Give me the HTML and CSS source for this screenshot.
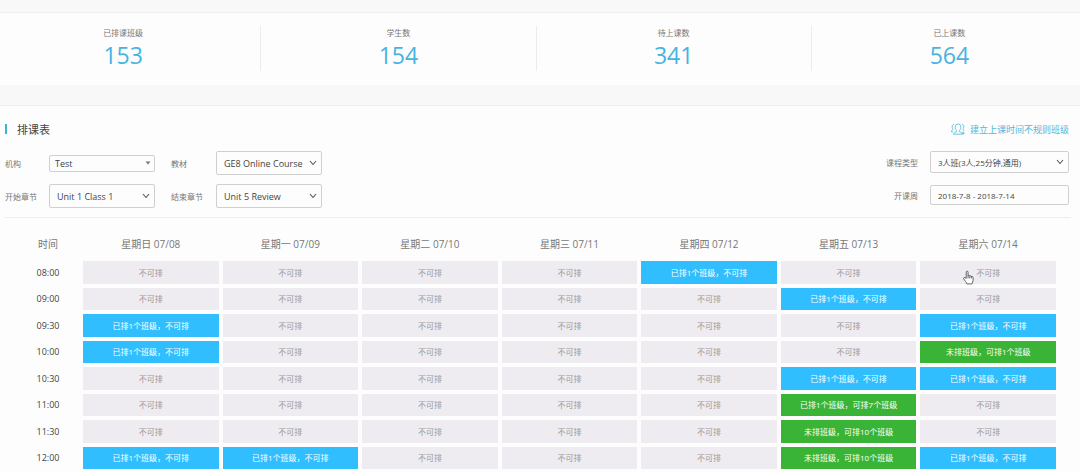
FILE: index.html
```
<!DOCTYPE html>
<html lang="zh-CN">
<head>
<meta charset="utf-8">
<title>排课表</title>
<link rel="stylesheet" href="styles.css">
</head>
<body>
<section class="stats">
  <dl class="stat"><dt>已排课班级</dt><dd>153</dd></dl>
  <dl class="stat"><dt>学生数</dt><dd>154</dd></dl>
  <dl class="stat"><dt>待上课数</dt><dd>341</dd></dl>
  <dl class="stat"><dt>已上课数</dt><dd>564</dd></dl>
</section>
<main class="panel">
  <header class="panel-head">
    <h1 class="title">排课表</h1>
    <a class="create" href="#">
      <svg class="create-icon" viewBox="0 0 14 12" aria-hidden="true"><path d="M4.2 4.2a2.8 3.3 0 0 1 5.6 0c0 1.8-.8 3-1.5 3.5v1c1.500.4 2.900.9 3.200 2.500h-9c.3-1.600 1.700-2.100 3.200-2.500v-1C5 7.200 4.200 6 4.200 4.200zM3.200 1.400C1.500 1.600 1 2.700 1.200 4.200c.1 1 .5 1.700 1 2.100C1.200 6.900.6 7.500.5 8.900h1.600M10.800 1.400c1.700.2 2.200 1.300 2 2.800-.1 1-.5 1.700-1 2.100.8.4 1.200.9 1.500 1.600M12.200 8.600v3M10.700 10.100h3"/></svg>
      <span>建立上课时间不规则班级</span>
    </a>
  </header>
  <form class="filters">
    <div class="filter-grid">
      <label for="org">机构</label>
      <div class="field">
        <select id="org" class="control compact"><option>Test</option></select>
        <svg class="caret" viewBox="0 0 6 4" aria-hidden="true"><path d="M.5.5h5L3 3.500z"/></svg>
      </div>
      <label for="book">教材</label>
      <div class="field">
        <select id="book" class="control"><option>GE8 Online Course</option></select>
        <svg class="chevron" viewBox="0 0 8 6" aria-hidden="true"><path d="M1 1l3 3.500L7 1"/></svg>
      </div>
      <label for="from">开始章节</label>
      <div class="field">
        <select id="from" class="control"><option>Unit 1 Class 1</option></select>
        <svg class="chevron" viewBox="0 0 8 6" aria-hidden="true"><path d="M1 1l3 3.500L7 1"/></svg>
      </div>
      <label for="to">结束章节</label>
      <div class="field">
        <select id="to" class="control"><option>Unit 5 Review</option></select>
        <svg class="chevron" viewBox="0 0 8 6" aria-hidden="true"><path d="M1 1l3 3.500L7 1"/></svg>
      </div>
    </div>
    <div class="filter-grid right">
      <label for="type">课程类型</label>
      <div class="field">
        <select id="type" class="control medium"><option>3人班(3人,25分钟,通用)</option></select>
        <svg class="chevron" viewBox="0 0 8 6" aria-hidden="true"><path d="M1 1l3 3.500L7 1"/></svg>
      </div>
      <label for="week">开课周</label>
      <div class="field"><input id="week" class="control date" type="text" value="2018-7-8 - 2018-7-14"></div>
    </div>
  </form>
  <div class="schedule-wrap">
    <table class="schedule">
      <thead>
        <tr><th class="time">时间</th><th>星期日 07/08</th><th>星期一 07/09</th><th>星期二 07/10</th><th>星期三 07/11</th><th>星期四 07/12</th><th>星期五 07/13</th><th>星期六 07/14</th></tr>
      </thead>
      <tbody>
        <tr><th>08:00</th><td>不可排</td><td>不可排</td><td>不可排</td><td>不可排</td><td class="booked">已排1个班级，不可排</td><td>不可排</td><td class="hovered">不可排<svg class="hand" viewBox="0 0 12 16" aria-hidden="true"><path d="M3.500 9V2.200c0-1.600 2-1.600 2 0v4c.5-.8 1.700-.6 1.900.3.600-.6 1.600-.4 1.800.5.800-.5 1.800 0 1.800 1v3c0 1.700-.8 2.500-1.200 4H4.200C4 13.500 2 11.500.8 9.500c-.7-1.200.7-2 1.500-1.200zM5.500 6v3M7.400 6.500V9M9.200 7v2"/></svg></td></tr>
        <tr><th>09:00</th><td>不可排</td><td>不可排</td><td>不可排</td><td>不可排</td><td>不可排</td><td class="booked">已排1个班级，不可排</td><td>不可排</td></tr>
        <tr><th>09:30</th><td class="booked">已排1个班级，不可排</td><td>不可排</td><td>不可排</td><td>不可排</td><td>不可排</td><td>不可排</td><td class="booked">已排1个班级，不可排</td></tr>
        <tr><th>10:00</th><td class="booked">已排1个班级，不可排</td><td>不可排</td><td>不可排</td><td>不可排</td><td>不可排</td><td>不可排</td><td class="open">未排班级，可排1个班级</td></tr>
        <tr><th>10:30</th><td>不可排</td><td>不可排</td><td>不可排</td><td>不可排</td><td>不可排</td><td class="booked">已排1个班级，不可排</td><td class="booked">已排1个班级，不可排</td></tr>
        <tr><th>11:00</th><td>不可排</td><td>不可排</td><td>不可排</td><td>不可排</td><td>不可排</td><td class="open">已排1个班级，可排7个班级</td><td>不可排</td></tr>
        <tr><th>11:30</th><td>不可排</td><td>不可排</td><td>不可排</td><td>不可排</td><td>不可排</td><td class="open">未排班级，可排10个班级</td><td>不可排</td></tr>
        <tr><th>12:00</th><td class="booked">已排1个班级，不可排</td><td class="booked">已排1个班级，不可排</td><td>不可排</td><td>不可排</td><td>不可排</td><td class="open">未排班级，可排10个班级</td><td class="booked">已排1个班级，不可排</td></tr>
      </tbody>
    </table>
  </div>
</main>
</body>
</html>
```
FILE: styles.css
```
* { box-sizing: border-box; }
body {
  margin: 0;
  padding-top: 12px;
  overflow-x: hidden;
  background: #f8f8f8;
  color: #666;
  font-family: "Open Sans", "Noto Sans CJK SC", sans-serif;
  font-size: 8px;
}

/* Summary figures */
.stats {
  display: grid;
  grid-template-columns: repeat(4, 1fr);
  margin: 0 -7px 0 -14px;
  padding: 13px 0 14px;
  background: #fdfdfd;
  border-top: 1px solid #f1f1f1;
}
.stat {
  margin: 0;
  text-align: center;
  border-right: 1px solid #ececec;
}
.stat:last-child { border-right: 0; }
.stat dt { line-height: 14px; color: #777; }
.stat dd {
  margin: 0;
  font-size: 23px;
  line-height: 31px;
  color: #46b4e2;
}

/* Timetable panel */
.panel {
  margin-top: 20px;
  padding: 11px 0 3px;
  background: #fdfdfd;
  border-top: 1px solid #eee;
}
.panel-head {
  display: flex;
  justify-content: space-between;
  align-items: center;
  height: 24px;
  padding: 0 11px 0 5px;
}
.title {
  display: flex;
  align-items: center;
  gap: 10px;
  margin: 0;
  font-size: 11px;
  font-weight: 400;
  color: #444;
}
.title::before {
  content: "";
  width: 2px;
  height: 10px;
  background: #3fb0dc;
}
.create {
  display: flex;
  align-items: center;
  gap: 5px;
  font-size: 9px;
  color: #4db9dd;
  text-decoration: none;
}
.create-icon {
  width: 14px;
  height: 12px;
  fill: none;
  stroke: currentColor;
  stroke-width: 0.8;
}

/* Filters */
.filters {
  display: flex;
  justify-content: space-between;
  margin: 0 9px 0 5px;
  padding: 10px 2px 9px 0;
  border-bottom: 1px solid #eee;
}
.filter-grid {
  display: grid;
  grid-template-columns: 44px 106px 61px 106px;
  row-gap: 9px;
  align-items: center;
}
.filter-grid label { color: #777; }
.filter-grid label:nth-of-type(even) { padding-left: 16px; }
.filter-grid.right {
  grid-template-columns: auto 139px;
  grid-auto-rows: 22px;
  column-gap: 12px;
  row-gap: 11px;
  align-content: start;
}
.filter-grid.right label { padding: 0; text-align: right; }
.field { display: grid; align-items: center; }
.control,
.chevron,
.caret { grid-area: 1 / 1; }
.control {
  width: 100%;
  height: 24px;
  padding: 0 18px 0 7px;
  appearance: none;
  background: #fdfdfd;
  border: 1px solid #d0d0d0;
  border-radius: 2px;
  color: #444;
  font: inherit;
  font-size: 9px;
}
.control.compact { height: 17px; padding-left: 5px; }
.control.medium { height: 22px; font-size: 8px; }
.control.date { height: 20px; padding-right: 7px; font-size: 8px; }
.chevron,
.caret {
  justify-self: end;
  pointer-events: none;
}
.chevron {
  width: 8px;
  height: 6px;
  margin-right: 5px;
  fill: none;
  stroke: #555;
  stroke-width: 1.1;
}
.caret {
  width: 6px;
  height: 4px;
  margin-right: 4px;
  fill: #777;
}

/* Weekly timetable */
.schedule-wrap { padding: 9px 20px 0 13px; }
.schedule {
  width: 100%;
  table-layout: fixed;
  border-collapse: separate;
  border-spacing: 4px;
  text-align: center;
}
.schedule th,
.schedule td { padding: 0; line-height: 12px; }
.schedule th { font-size: 9px; font-weight: 400; color: #444; }
.schedule thead th {
  height: 26px;
  font-size: 10px;
  color: #777;
}
.schedule .time { width: 62px; }
.schedule td {
  height: 23px;
  background: #eeebf1;
  color: #999;
}
.schedule tbody tr:nth-child(even) td { height: 22px; }
.schedule .booked { background: #30beff; color: #fff; }
.schedule .open { background: #39b437; color: #fff; }
.hovered { position: relative; cursor: pointer; }
.hand {
  position: absolute;
  top: 9px;
  left: 43px;
  width: 11px;
  height: 15px;
  fill: #fff;
  stroke: #444;
  stroke-width: 0.9;
}
```
